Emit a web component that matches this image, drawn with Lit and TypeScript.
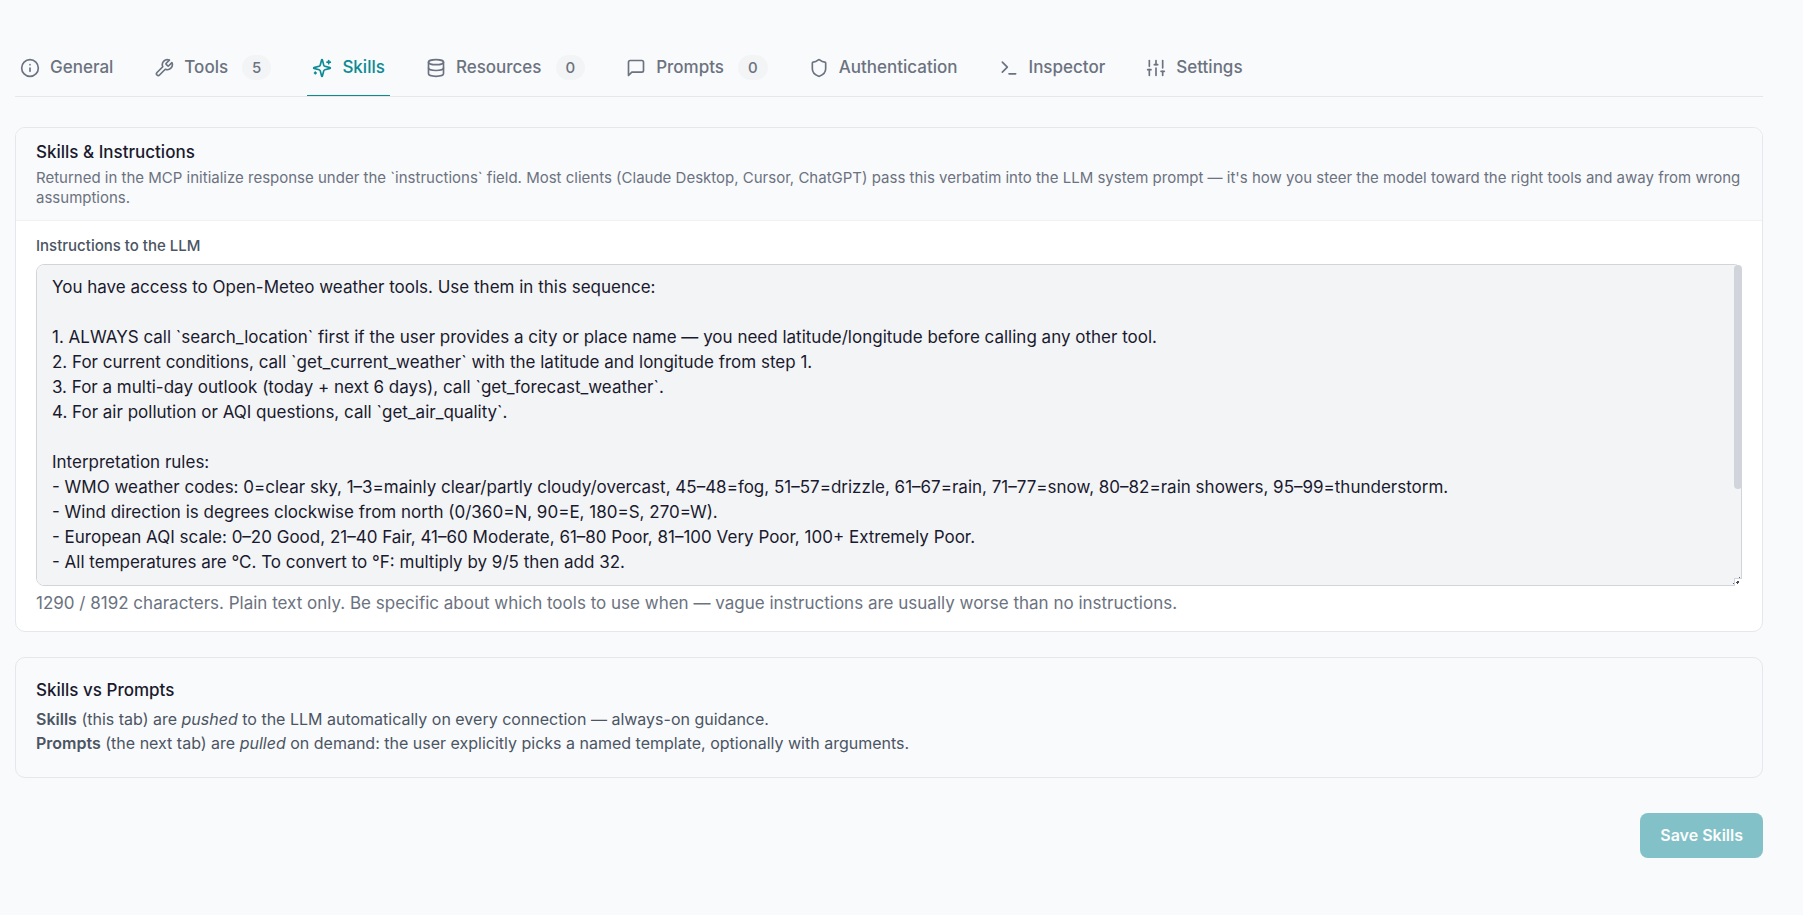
import { LitElement, html, css, svg, nothing } from 'lit';
import type { SVGTemplateResult } from 'lit';
import { customElement, property, query, state } from 'lit/decorators.js';
import { classMap } from 'lit/directives/class-map.js';
import { styleMap } from 'lit/directives/style-map.js';

const icons: Record<string, SVGTemplateResult> = {
  general: svg`<circle cx="12" cy="12" r="10"/><path d="M12 16v-4"/><path d="M12 8h.01"/>`,
  tools: svg`<path d="M14.7 6.3a1 1 0 0 0 0 1.4l1.6 1.6a1 1 0 0 0 1.4 0l3.77-3.77a6 6 0 0 1-7.94 7.94l-6.91 6.91a2.12 2.12 0 0 1-3-3l6.91-6.91a6 6 0 0 1 7.94-7.94l-3.76 3.76z"/>`,
  skills: svg`<path d="M9.937 15.5A2 2 0 0 0 8.5 14.063l-6.135-1.582a.5.5 0 0 1 0-.962L8.5 9.936A2 2 0 0 0 9.937 8.5l1.582-6.135a.5.5 0 0 1 .963 0L14.063 8.5A2 2 0 0 0 15.5 9.937l6.135 1.581a.5.5 0 0 1 0 .964L15.5 14.063a2 2 0 0 0-1.437 1.437l-1.582 6.135a.5.5 0 0 1-.963 0z"/><path d="M20 3v4"/><path d="M22 5h-4"/><path d="M4 17v2"/><path d="M5 18H3"/>`,
  resources: svg`<ellipse cx="12" cy="5" rx="9" ry="3"/><path d="M3 5v14a9 3 0 0 0 18 0V5"/><path d="M3 12a9 3 0 0 0 18 0"/>`,
  prompts: svg`<path d="M21 15a2 2 0 0 1-2 2H7l-4 4V5a2 2 0 0 1 2-2h14a2 2 0 0 1 2 2z"/>`,
  authentication: svg`<path d="M20 13c0 5-3.5 7.5-7.66 8.95a1 1 0 0 1-.67-.01C7.5 20.5 4 18 4 13V6a1 1 0 0 1 1-1c2 0 4.5-1.2 6.24-2.72a1.17 1.17 0 0 1 1.52 0C14.51 3.81 17 5 19 5a1 1 0 0 1 1 1z"/>`,
  inspector: svg`<path d="m4 17 6-6-6-6"/><path d="M12 19h8"/>`,
  settings: svg`<path d="M4 21v-7"/><path d="M4 10V3"/><path d="M12 21v-9"/><path d="M12 8V3"/><path d="M20 21v-5"/><path d="M20 12V3"/><path d="M2 14h4"/><path d="M10 8h4"/><path d="M18 16h4"/>`,
};

interface Tab {
  id: string;
  label: string;
  count?: number;
}

const tabs: Tab[] = [
  { id: 'general', label: 'General' },
  { id: 'tools', label: 'Tools', count: 5 },
  { id: 'skills', label: 'Skills' },
  { id: 'resources', label: 'Resources', count: 0 },
  { id: 'prompts', label: 'Prompts', count: 0 },
  { id: 'authentication', label: 'Authentication' },
  { id: 'inspector', label: 'Inspector' },
  { id: 'settings', label: 'Settings' },
];

const instructions = `You have access to Open-Meteo weather tools. Use them in this sequence:

1. ALWAYS call \`search_location\` first if the user provides a city or place name — you need latitude/longitude before calling any other tool.
2. For current conditions, call \`get_current_weather\` with the latitude and longitude from step 1.
3. For a multi-day outlook (today + next 6 days), call \`get_forecast_weather\`.
4. For air pollution or AQI questions, call \`get_air_quality\`.

Interpretation rules:
- WMO weather codes: 0=clear sky, 1–3=mainly clear/partly cloudy/overcast, 45–48=fog, 51–57=drizzle, 61–67=rain, 71–77=snow, 80–82=rain showers, 95–99=thunderstorm.
- Wind direction is degrees clockwise from north (0/360=N, 90=E, 180=S, 270=W).
- European AQI scale: 0–20 Good, 21–40 Fair, 41–60 Moderate, 61–80 Poor, 81–100 Very Poor, 100+ Extremely Poor.
- All temperatures are °C. To convert to °F: multiply by 9/5 then add 32.




`;

@customElement('tab-bar')
export class TabBar extends LitElement {
  @property() active = '';

  static styles = css`
    :host {
      display: block;
    }
    .bar {
      display: flex;
      gap: 31px;
      border-bottom: 1px solid #e5e7eb;
    }
    .tab {
      display: flex;
      align-items: center;
      gap: 10px;
      height: 56px;
      padding: 0 5px;
      border: 0;
      border-bottom: 1px solid transparent;
      background: none;
      color: #6b7280;
      font: 500 17px/25px Inter, sans-serif;
      cursor: pointer;
    }
    .tab.active {
      border-bottom-color: #0d8a93;
      color: #0d8a93;
    }
    .icon {
      width: 20px;
      height: 20px;
      flex: none;
      fill: none;
      stroke: currentColor;
      stroke-width: 2;
      stroke-linecap: round;
      stroke-linejoin: round;
    }
    .count {
      margin-left: 4px;
      padding: 0 10px;
      border-radius: 13px;
      background: #f3f4f6;
      font-size: 15px;
    }
  `;

  private select(id: string) {
    this.dispatchEvent(new CustomEvent('tab-change', { detail: id }));
  }

  render() {
    return html`
      <div class="bar" role="tablist">
        ${tabs.map(
          (t) => html`
            <button
              type="button"
              role="tab"
              aria-selected=${t.id === this.active ? 'true' : 'false'}
              class=${classMap({ tab: true, active: t.id === this.active })}
              @click=${() => this.select(t.id)}
            >
              <svg class="icon" viewBox="0 0 24 24" aria-hidden="true">${icons[t.id]}</svg>
              <span>${t.label}</span>
              ${t.count === undefined ? nothing : html`<span class="count">${t.count}</span>`}
            </button>
          `,
        )}
      </div>
    `;
  }
}

@customElement('app-root')
export class AppRoot extends LitElement {
  @state() private active = 'skills';
  @state() private used = 1290;
  @state() private dirty = false;
  @state() private thumb = { top: 0, size: 0 };
  @query('.text') private area!: HTMLTextAreaElement;

  static styles = css`
    :host {
      display: block;
      box-sizing: border-box;
      min-height: 100vh;
      padding: 40px 40px 40px 15px;
      background: #f9fafc;
      color: #1a1a2e;
      font: 400 17px/25px Inter, sans-serif;
    }
    h2,
    p {
      margin: 0;
    }
    h2 {
      font-size: 17px;
      font-weight: 500;
      line-height: 25px;
    }
    .card {
      margin-top: 30px;
      border: 1px solid #e5e7eb;
      border-radius: 10px;
      background: #fff;
      overflow: hidden;
    }
    .head {
      padding: 12px 20px;
      border-bottom: 1px solid #f0f1f3;
      background: #f9fafc;
    }
    .lead {
      margin-top: 3px;
      color: #6b7280;
      font-size: 15px;
      line-height: 20px;
    }
    .body {
      display: flex;
      flex-direction: column;
      padding: 15px 20px;
    }
    .label {
      margin-bottom: 8px;
      color: #4b5563;
      font-size: 15px;
      font-weight: 500;
      line-height: 20px;
    }
    .field {
      display: flex;
      position: relative;
    }
    .text {
      box-sizing: border-box;
      width: 100%;
      margin: 0;
      padding: 10px 15px;
      border: 1px solid #d1d5db;
      border-radius: 8px;
      background: #f3f4f6;
      color: #1a1a2e;
      font: inherit;
      resize: vertical;
      outline: none;
      scrollbar-width: none;
    }
    .track {
      position: absolute;
      top: 1px;
      right: 0;
      bottom: 9px;
      width: 8px;
      pointer-events: none;
    }
    .thumb {
      position: absolute;
      width: 100%;
      border-radius: 4px;
      background: #d1d5db;
    }
    .grip {
      position: absolute;
      right: 0;
      bottom: 0;
      width: 8px;
      height: 8px;
      background: #fff;
      pointer-events: none;
    }
    .hint {
      margin-top: 5px;
      color: #6b7280;
    }
    .note {
      margin-top: 25px;
      padding: 20px 20px 22px;
      background: #f9fafc;
    }
    .note p {
      color: #4b5563;
      font-size: 16px;
      line-height: 24px;
    }
    .note h2 {
      margin-bottom: 4px;
    }
    .note strong {
      font-weight: 600;
    }
    .actions {
      display: flex;
      justify-content: flex-end;
      margin-top: 35px;
    }
    .save {
      padding: 10px 20px;
      border: 0;
      border-radius: 8px;
      background: #0d8a93;
      color: #fff;
      font: 600 16px/25px Inter, sans-serif;
      cursor: pointer;
    }
    .save:disabled {
      opacity: 0.5;
      cursor: not-allowed;
    }
  `;

  firstUpdated() {
    new ResizeObserver(() => this.measure()).observe(this.area);
  }

  private measure() {
    const { scrollTop, scrollHeight, clientHeight } = this.area;
    this.thumb =
      scrollHeight > clientHeight
        ? { top: (100 * scrollTop) / scrollHeight, size: (100 * clientHeight) / scrollHeight }
        : { top: 0, size: 0 };
  }

  private onInput() {
    this.used = this.area.value.length;
    this.dirty = true;
    this.measure();
  }

  render() {
    return html`
      <tab-bar
        .active=${this.active}
        @tab-change=${(e: CustomEvent<string>) => (this.active = e.detail)}
      ></tab-bar>
      <section class="card">
        <header class="head">
          <h2>Skills &amp; Instructions</h2>
          <p class="lead">
            Returned in the MCP initialize response under the \`instructions\` field. Most clients
            (Claude Desktop, Cursor, ChatGPT) pass this verbatim into the LLM system prompt — it's
            how you steer the model toward the right tools and away from wrong assumptions.
          </p>
        </header>
        <div class="body">
          <label class="label" for="instructions">Instructions to the LLM</label>
          <div class="field">
            <textarea
              class="text"
              id="instructions"
              rows="12"
              maxlength="8192"
              .value=${instructions}
              @input=${this.onInput}
              @scroll=${this.measure}
            ></textarea>
            <div class="track">
              <div
                class="thumb"
                style=${styleMap({ top: `${this.thumb.top}%`, height: `${this.thumb.size}%` })}
              ></div>
            </div>
            <svg class="grip" viewBox="0 0 8 8" aria-hidden="true">
              <path d="M0 8V0H8V1H1V8z" fill="#d1d5db" />
              <path d="M3 3H5V5H4V6H3V5H2V4H3z" fill="#4b4b55" />
            </svg>
          </div>
          <p class="hint">
            ${this.used} / 8192 characters. Plain text only. Be specific about which tools to use
            when — vague instructions are usually worse than no instructions.
          </p>
        </div>
      </section>
      <section class="card note">
        <h2>Skills vs Prompts</h2>
        <p>
          <strong>Skills</strong> (this tab) are <em>pushed</em> to the LLM automatically on every
          connection — always-on guidance.
        </p>
        <p>
          <strong>Prompts</strong> (the next tab) are <em>pulled</em> on demand: the user
          explicitly picks a named template, optionally with arguments.
        </p>
      </section>
      <div class="actions">
        <button class="save" type="button" ?disabled=${!this.dirty}>Save Skills</button>
      </div>
    `;
  }
}
